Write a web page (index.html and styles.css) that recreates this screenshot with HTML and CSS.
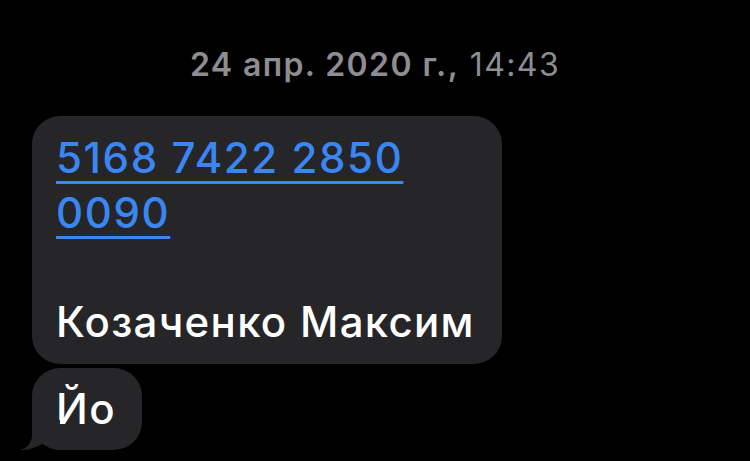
FILE: index.html
```html
<!DOCTYPE html>
<html lang="ru">
<head>
<meta charset="utf-8">
<link rel="stylesheet" href="styles.css">
</head>
<body>
<div class="thread">
  <div class="stamp"><span class="stamp-date">24 апр. 2020 г.,</span> 14:43</div>
  <div class="bubble bubble-wide"><a class="link" href="#">5168 7422 2850 0090</a><br><br><span class="name">Козаченко Максим</span></div>
  <div class="bubble bubble-last">Йо<svg class="tail" width="40" height="30" viewBox="0 0 40 30"><path d="M12,0 L12,15 C12,23 6,29 0,30 C8,30.5 16,27.5 23,23.5 C28,27 33,30 40,30 L40,0 Z" fill="#262629"/></svg></div>
</div>
</body>
</html>
```
FILE: styles.css
```css
html, body {
  margin: 0;
  padding: 0;
  background: #000;
}
.thread {
  width: 750px;
  height: 461px;
  overflow: hidden;
  display: flex;
  flex-direction: column;
  align-items: flex-start;
  font-family: Inter, "Liberation Sans", sans-serif;
}
.stamp {
  align-self: center;
  margin-top: 45px;
  margin-bottom: 31px;
  font-size: 32px;
  line-height: 40px;
  letter-spacing: 1.4px;
  color: #8d8d92;
  font-weight: 400;
}
.stamp-date {
  font-weight: 600;
}
.bubble {
  position: relative;
  margin-left: 32px;
  background: #262629;
  color: #fff;
  font-size: 42px;
  font-weight: 500;
  letter-spacing: 1.6px;
  line-height: 54.7px;
  border-radius: 28px;
  padding: 14px 24px 13px 24px;
  box-sizing: border-box;
  max-width: 470px;
}
.bubble-wide {
  width: 470px;
  padding-top: 15px;
  padding-bottom: 14px;
}
.name {
  white-space: nowrap;
  letter-spacing: 1.3px;
}
.bubble-last {
  margin-top: 4px;
  padding-right: 26px;
}
.link {
  color: #3a86f2;
  text-decoration: underline;
  text-decoration-thickness: 3px;
  text-underline-offset: 8px;
}
.tail {
  position: absolute;
  left: -12px;
  bottom: 0;
  display: block;
}
```
